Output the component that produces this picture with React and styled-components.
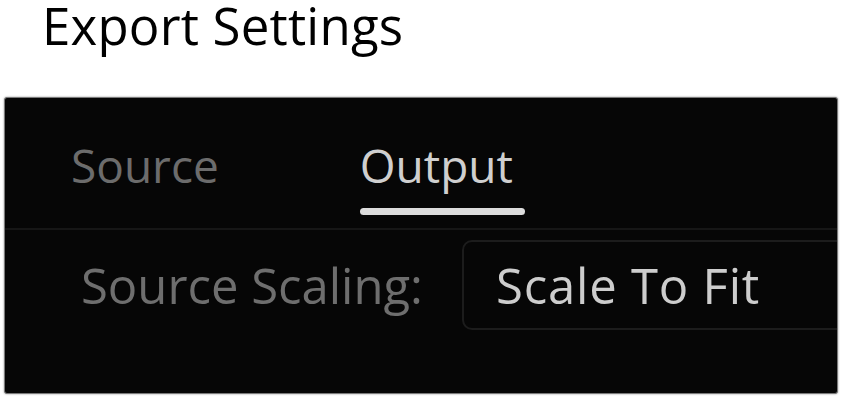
import React from 'react';
import styled, { createGlobalStyle } from 'styled-components';

const GlobalStyle = createGlobalStyle`
  html, body {
    margin: 0;
    padding: 0;
    background: #ffffff;
  }
  body {
    font-family: "Open Sans", "Noto Sans", "Liberation Sans", sans-serif;
    overflow: hidden;
  }
`;

const Page = styled.div`
  width: 844px;
  height: 401px;
  display: flex;
  flex-direction: column;
`;

const Title = styled.h1`
  margin: 0;
  padding: 0 0 0 42px;
  height: 97px;
  font-size: 51px;
  line-height: 51px;
  font-weight: 500;
  color: #000;
  letter-spacing: 0.2px;
`;

const Panel = styled.section`
  margin: 0 6px 0 4px;
  height: 297px;
  box-sizing: border-box;
  background: #060606;
  border: 1px solid #7a7a7a;
  border-radius: 3px;
  box-shadow: 0 0 2px rgba(0, 0, 0, 0.45);
  overflow: hidden;
  display: flex;
  flex-direction: column;
`;

const TabBar = styled.nav`
  display: flex;
  gap: 141px;
  padding: 44px 0 0 66px;
  border-bottom: 2px solid #161616;
`;

const Tab = styled.div`
  position: relative;
  font-size: 46px;
  line-height: 46px;
  color: ${({ $active }) => ($active ? '#cfcfcf' : '#6c6c6c')};
  padding-bottom: 40px;

  &::after {
    content: '';
    display: ${({ $active }) => ($active ? 'block' : 'none')};
    position: absolute;
    left: 0;
    right: -12px;
    bottom: 13px;
    height: 7px;
    border-radius: 4px;
    background: #dcdcdc;
  }
`;

const Row = styled.div`
  display: flex;
  align-items: center;
  padding: 10px 0 0 76px;
`;

const Label = styled.span`
  width: 381px;
  flex: none;
  font-size: 49px;
  line-height: 49px;
  color: #6e6e6e;
`;

const Select = styled.div`
  flex: 1;
  margin-right: -30px;
  height: 90px;
  box-sizing: border-box;
  border: 2px solid #1c1c1c;
  border-radius: 10px;
  display: flex;
  align-items: center;
  padding-left: 32px;
  font-size: 49px;
  line-height: 49px;
  letter-spacing: 0.8px;
  color: #cdcdcd;
`;

export default function App() {
  return (
    <Page>
      <GlobalStyle />
      <Title>Export Settings</Title>
      <Panel>
        <TabBar>
          <Tab>Source</Tab>
          <Tab $active>Output</Tab>
        </TabBar>
        <Row>
          <Label>Source Scaling:</Label>
          <Select>Scale To Fit</Select>
        </Row>
      </Panel>
    </Page>
  );
}
